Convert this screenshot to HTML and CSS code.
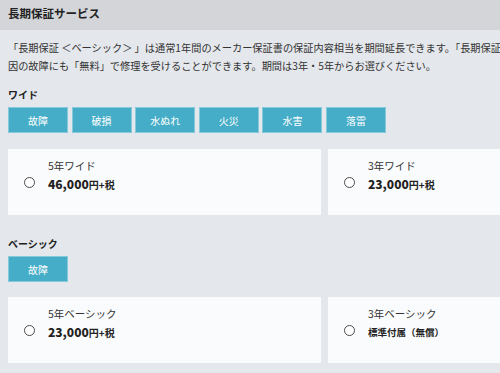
FILE: index.html
```html
<!DOCTYPE html>
<html lang="ja">
<head>
<meta charset="utf-8">
<title>長期保証サービス</title>
<link rel="stylesheet" href="styles.css">
</head>
<body>
<div class="page">
  <header class="head"><h1 class="head-title">長期保証サービス</h1></header>
  <div class="content">
    <p class="desc">「長期保証 ＜ベーシック＞ 」は通常1年間のメーカー保証書の保証内容相当を期間延長できます。「長期保証＜ワイド＞」は、自然故障に加えて破損や水ぬれなど外的要<br>因の故障にも「無料」で修理を受けることができます。期間は3年・5年からお選びください。</p>

    <section class="group group-wide">
      <h2 class="label">ワイド</h2>
      <div class="tags">
        <span class="tag">故障</span>
        <span class="tag">破損</span>
        <span class="tag">水ぬれ</span>
        <span class="tag">火災</span>
        <span class="tag">水害</span>
        <span class="tag">落雷</span>
      </div>
      <div class="plans">
        <label class="plan"><span class="radio"></span><span class="info"><span class="name">5年ワイド</span><span class="price"><b class="amount">46,000</b>円+税</span></span></label>
        <label class="plan"><span class="radio"></span><span class="info"><span class="name">3年ワイド</span><span class="price"><b class="amount">23,000</b>円+税</span></span></label>
      </div>
    </section>

    <section class="group group-basic">
      <h2 class="label">ベーシック</h2>
      <div class="tags">
        <span class="tag">故障</span>
      </div>
      <div class="plans">
        <label class="plan"><span class="radio"></span><span class="info"><span class="name">5年ベーシック</span><span class="price"><b class="amount">23,000</b>円+税</span></span></label>
        <label class="plan"><span class="radio"></span><span class="info"><span class="name">3年ベーシック</span><span class="price price-free">標準付属（無償）</span></span></label>
      </div>
    </section>
  </div>
</div>
</body>
</html>
```
FILE: styles.css
```css
html, body {
  margin: 0;
  padding: 0;
}
body {
  background: #e4e7eb;
  overflow: hidden;
  font-family: "Noto Sans CJK JP", "Noto Sans", sans-serif;
  color: #333;
}
.page {
  width: 660px;
}
.head {
  height: 30px;
  background: #d3d5d9;
  padding-left: 8px;
  box-sizing: border-box;
}
.head-title {
  margin: 0;
  font-size: 11.5px;
  line-height: 27px;
  font-weight: 700;
  color: #222;
}
.content {
  padding: 0 8px;
}
.desc {
  margin: 9px 0 0;
  font-size: 10.2px;
  line-height: 18px;
  white-space: nowrap;
  color: #333;
}
.label {
  margin: 11px 0 0;
  font-size: 10px;
  line-height: 18px;
  font-weight: 700;
  color: #222;
}
.group-basic .label {
  margin-top: 20px;
}
.tags {
  display: flex;
  gap: 3.6px;
  margin-top: 3px;
}
.tag {
  width: 60px;
  height: 26px;
  box-sizing: border-box;
  border: 1px solid #86c9da;
  background: #45adc7;
  color: #fff;
  font-size: 10px;
  display: flex;
  align-items: center;
  justify-content: center;
}
.plans {
  display: grid;
  grid-template-columns: 313px 313px;
  gap: 7px;
  margin-top: 16px;
}
.group-basic .plans {
  margin-top: 15px;
}
.plan {
  height: 66px;
  background: #fafbfc;
  display: flex;
}
.radio {
  width: 11px;
  height: 11px;
  border: 1px solid #4a4a4a;
  border-radius: 50%;
  box-sizing: border-box;
  background: #fff;
  margin-left: 15.5px;
  margin-top: 1px;
  align-self: center;
  flex: none;
}
.info {
  margin: 8px 0 0 13.5px;
  display: flex;
  flex-direction: column;
}
.name {
  font-size: 10.5px;
  line-height: 18px;
  color: #333;
}
.price {
  font-size: 10px;
  line-height: 18px;
  font-weight: 700;
  color: #222;
}
.amount {
  font-size: 12px;
}
.price-free {
  font-size: 9.5px;
}
```
